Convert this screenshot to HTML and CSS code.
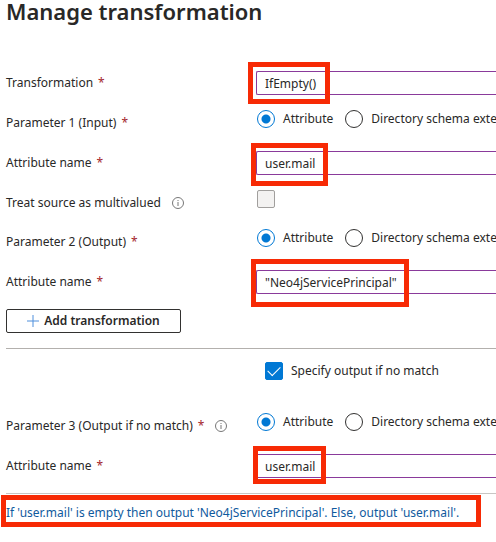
FILE: index.html
```html
<!DOCTYPE html>
<html lang="en">
<head>
<meta charset="utf-8">
<title>Manage transformation</title>
<link rel="stylesheet" href="styles.css">
</head>
<body>
<main class="panel">
  <h1 class="title">Manage transformation</h1>
  <form>
    <div class="row">
      <label class="label" for="transformation">Transformation <span class="required">*</span></label>
      <div class="field"><input class="text" id="transformation" type="text" value="IfEmpty()"><span class="mark mark-function"></span></div>
    </div>
    <div class="row" role="radiogroup" aria-labelledby="p1">
      <span class="label" id="p1">Parameter 1 (Input) <span class="required">*</span></span>
      <div class="choices">
        <label class="choice"><input class="radio" type="radio" name="p1" checked>Attribute</label>
        <label class="choice"><input class="radio" type="radio" name="p1">Directory schema extension</label>
      </div>
    </div>
    <div class="row">
      <label class="label" for="attr1">Attribute name <span class="required">*</span></label>
      <div class="field"><input class="text" id="attr1" type="text" value="user.mail"><span class="mark mark-input"></span></div>
    </div>
    <div class="row row-short">
      <label class="label" for="multi">Treat source as multivalued
        <svg class="info" viewBox="0 0 12 12" aria-hidden="true"><circle cx="6" cy="6" r="5.5"/><path d="M6 5v4M6 3v1"/></svg>
      </label>
      <div class="choices"><input class="check" id="multi" type="checkbox" disabled></div>
    </div>
    <div class="row" role="radiogroup" aria-labelledby="p2">
      <span class="label" id="p2">Parameter 2 (Output) <span class="required">*</span></span>
      <div class="choices">
        <label class="choice"><input class="radio" type="radio" name="p2" checked>Attribute</label>
        <label class="choice"><input class="radio" type="radio" name="p2">Directory schema extension</label>
      </div>
    </div>
    <div class="row">
      <label class="label" for="attr2">Attribute name <span class="required">*</span></label>
      <div class="field"><input class="text" id="attr2" type="text" value="&quot;Neo4jServicePrincipal&quot;"><span class="mark mark-output"></span></div>
    </div>
    <button class="add" type="button">
      <svg class="plus" viewBox="0 0 12 12" aria-hidden="true"><path d="M6 0v12M0 6h12"/></svg>
      Add transformation
    </button>
    <section class="fallback">
      <label class="choice specify"><input class="check" type="checkbox" checked>Specify output if no match</label>
      <div class="row" role="radiogroup" aria-labelledby="p3">
        <span class="label" id="p3">Parameter 3 (Output if no match) <span class="required">*</span>
          <svg class="info" viewBox="0 0 12 12" aria-hidden="true"><circle cx="6" cy="6" r="5.5"/><path d="M6 5v4M6 3v1"/></svg>
        </span>
        <div class="choices">
          <label class="choice"><input class="radio" type="radio" name="p3" checked>Attribute</label>
          <label class="choice"><input class="radio" type="radio" name="p3">Directory schema extension</label>
        </div>
      </div>
      <div class="row">
        <label class="label" for="attr3">Attribute name <span class="required">*</span></label>
        <div class="field"><input class="text" id="attr3" type="text" value="user.mail"><span class="mark mark-fallback"></span></div>
      </div>
    </section>
    <div class="summary">
      <p class="sentence">If 'user.mail' is empty then output 'Neo4jServicePrincipal'. Else, output 'user.mail'.<span class="mark mark-summary"></span></p>
    </div>
  </form>
</main>
</body>
</html>
```

FILE: styles.css
```css
* { box-sizing: border-box; }

body {
  margin: 0;
  background: #fff;
  color: #292827;
  font: 12px/20px "Noto Sans", "Open Sans", sans-serif;
}

.panel {
  padding: 0 0 16px 6px;
  overflow: hidden;
}

.title {
  margin: 0 0 41px;
  font-size: 22px;
  line-height: 22px;
  font-weight: 600;
}

.row {
  display: grid;
  grid-template-columns: 250px minmax(0, 1fr);
  align-items: center;
  height: 40px;
}

.row-short { height: 39px; }

.label {
  display: flex;
  align-items: center;
  gap: 5px;
  white-space: nowrap;
}

.required { color: #a4262c; }

.info {
  width: 12px;
  height: 12px;
  margin-left: 6px;
  fill: none;
  stroke: #777;
  stroke-width: 1;
}

.field { position: relative; }

.text {
  display: block;
  width: 100%;
  height: 24px;
  padding: 0 8px;
  border: 1px solid #8a3a9b;
  border-right: 0;
  border-radius: 2px 0 0 2px;
  background: #fff;
  color: inherit;
  font: inherit;
}

.choices {
  display: flex;
  gap: 12px;
  padding: 0 0 8px 1px;
}

.choice {
  display: flex;
  flex: none;
  align-items: center;
  gap: 8px;
  white-space: nowrap;
}

.radio,
.check {
  appearance: none;
  flex: none;
  width: 18px;
  height: 18px;
  margin: 0;
}

.radio {
  border: 1px solid #323130;
  border-radius: 50%;
}

.radio:checked {
  border-color: #0078d4;
  background: radial-gradient(circle, #0078d4 4px, transparent 5px);
}

.check {
  border: 1px solid #a19f9d;
  border-radius: 2px;
  background: #f3f2f1;
}

.check:checked {
  display: grid;
  place-items: center;
  border-color: #0078d4;
  background: #0078d4;
}

.check:checked::before {
  content: "";
  width: 11px;
  height: 6px;
  margin-bottom: 4px;
  border: solid #fff;
  border-width: 0 0 1px 1px;
  transform: rotate(-45deg);
}

.add {
  display: flex;
  align-items: center;
  justify-content: center;
  gap: 5px;
  width: 175px;
  height: 24px;
  margin: 7px 0 15px;
  padding: 0;
  border: 1px solid #323130;
  border-radius: 2px;
  background: #fff;
  color: inherit;
  font: inherit;
  font-weight: 600;
}

.plus {
  width: 12px;
  height: 12px;
  fill: none;
  stroke: #4f8fdc;
  stroke-width: 1;
}

.fallback {
  padding: 12px 0 7px;
  border-top: 1px solid #b3b0ad;
}

.specify { margin: 0 0 25px 259px; }

.summary {
  padding-top: 9px;
  border-top: 1px solid #c8c6c4;
}

.sentence {
  position: relative;
  width: fit-content;
  margin: 0;
  color: #0f5a9e;
  white-space: nowrap;
}

/* Callout frames drawn over the form */
.mark {
  position: absolute;
  border: 5px solid #f72a05;
  pointer-events: none;
}

.mark-function { left: -8px; top: -9px; width: 82px; height: 42px; }
.mark-input { left: -5px; top: -8px; width: 77px; height: 43px; }
.mark-output { left: -5px; top: -11px; width: 158px; height: 48px; }
.mark-fallback { left: -3px; top: -8px; width: 73px; height: 38px; }
.mark-summary { left: -5px; right: -22px; top: -8px; height: 32px; }
```
